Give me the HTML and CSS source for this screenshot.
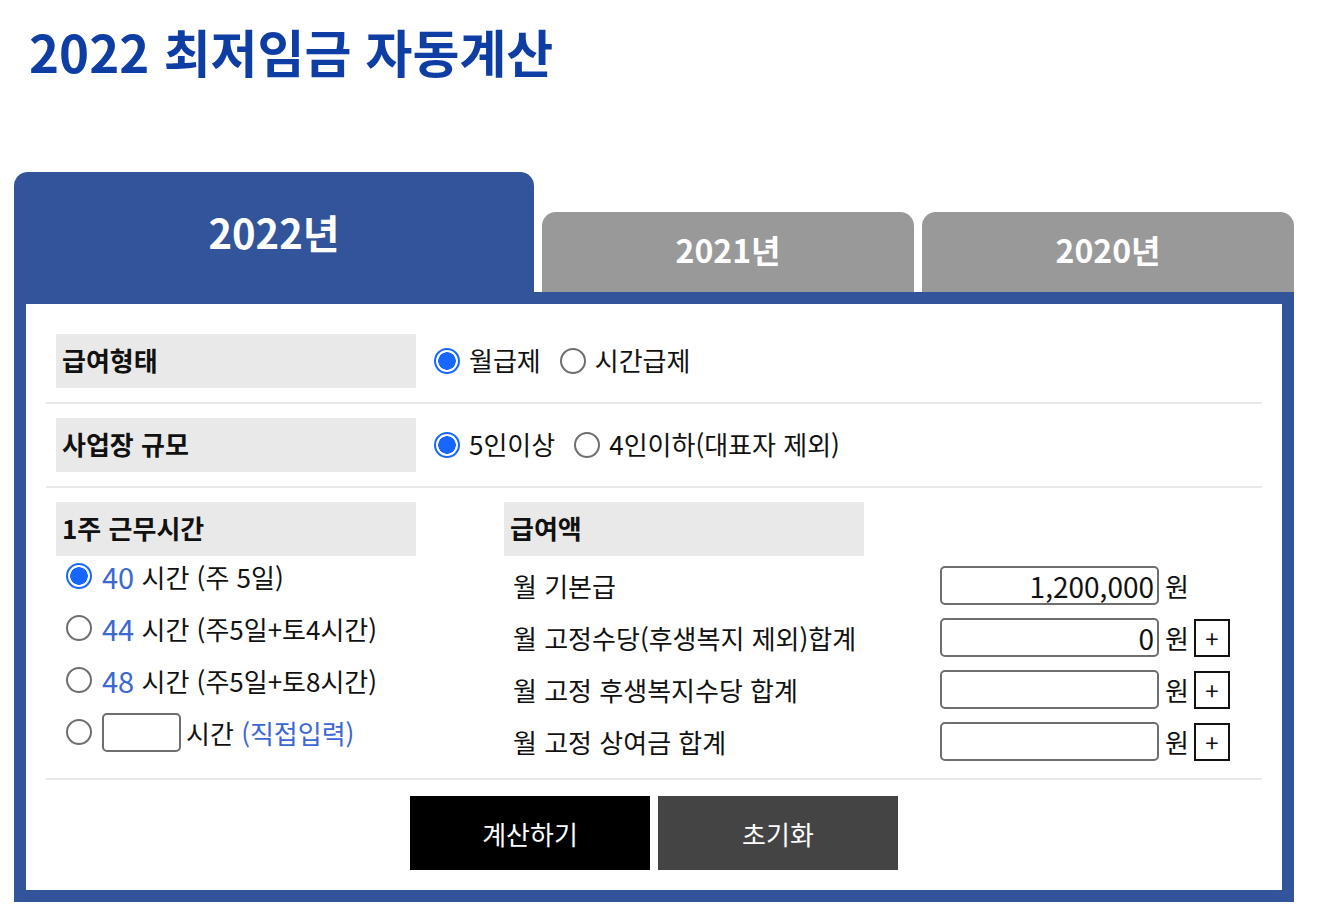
FILE: index.html
```html
<!DOCTYPE html>
<html lang="ko">

<head>
    <meta charset="UTF-8">
    <meta name="viewport" content="width=device-width, initial-scale=1.0">
    <title>2022 최저임금 자동계산</title>
    <link rel="stylesheet" href="styles.css">
</head>

<body>
    <h1 class="page-title">2022 최저임금 자동계산</h1>

    <div class="calc">
        <div class="tabs">
            <div class="tab active">2022년</div>
            <div class="tab">2021년</div>
            <div class="tab">2020년</div>
        </div>

        <div class="panel">
            <div class="row">
                <div class="label">급여형태</div>
                <div class="options">
                    <label class="opt"><input class="radio" type="radio" name="paytype" checked>월급제</label>
                    <label class="opt"><input class="radio" type="radio" name="paytype">시간급제</label>
                </div>
            </div>

            <div class="row">
                <div class="label">사업장 규모</div>
                <div class="options">
                    <label class="opt"><input class="radio" type="radio" name="size" checked>5인이상</label>
                    <label class="opt"><input class="radio" type="radio" name="size">4인이하(대표자 제외)</label>
                </div>
            </div>

            <div class="row row-split">
                <div class="col-hours">
                    <div class="label">1주 근무시간</div>
                    <div class="hour-list">
                        <label class="hour"><input class="radio" type="radio" name="hours" checked><span class="num digits">40</span> 시간 (주 5일)</label>
                        <label class="hour"><input class="radio" type="radio" name="hours"><span class="num digits">44</span> 시간 (주5일+토4시간)</label>
                        <label class="hour"><input class="radio" type="radio" name="hours"><span class="num digits">48</span> 시간 (주5일+토8시간)</label>
                        <label class="hour"><input class="radio" type="radio" name="hours"><input class="hour-input" type="text">시간 <span class="num">(직접입력)</span></label>
                    </div>
                </div>

                <div class="col-pay">
                    <div class="label">급여액</div>
                    <div class="pay-list">
                        <div class="pay-row">
                            <span class="pay-name">월 기본급</span>
                            <input class="money" type="text" value="1,200,000">
                            <span class="won">원</span>
                        </div>
                        <div class="pay-row">
                            <span class="pay-name">월 고정수당(후생복지 제외)합계</span>
                            <input class="money" type="text" value="0">
                            <span class="won">원</span>
                            <button class="plus">+</button>
                        </div>
                        <div class="pay-row">
                            <span class="pay-name">월 고정 후생복지수당 합계</span>
                            <input class="money" type="text">
                            <span class="won">원</span>
                            <button class="plus">+</button>
                        </div>
                        <div class="pay-row">
                            <span class="pay-name">월 고정 상여금 합계</span>
                            <input class="money" type="text">
                            <span class="won">원</span>
                            <button class="plus">+</button>
                        </div>
                    </div>
                </div>
            </div>

            <div class="actions">
                <button class="btn btn-calc">계산하기</button>
                <button class="btn btn-reset">초기화</button>
            </div>
        </div>
    </div>
</body>

</html>
```

FILE: styles.css
```css
* {
    box-sizing: border-box;
}

body {
    margin: 0;
    font-family: "Noto Sans CJK KR", "Noto Sans", sans-serif;
    font-size: 26px;
    color: #111;
    background-color: #fff;
}

input,
button {
    font-family: inherit;
}

.page-title {
    margin: 21px 0 0 29px;
    font-size: 51px;
    line-height: 60px;
    font-weight: 700;
    color: #0e3da4;
}

.calc {
    width: 1280px;
    margin: 91px 0 0 14px;
}

.tabs {
    display: flex;
    align-items: flex-end;
    gap: 8px;
}

.tab {
    width: 372px;
    height: 80px;
    line-height: 74px;
    border-radius: 14px 14px 0 0;
    background-color: #999;
    color: #fff;
    font-size: 32px;
    font-weight: 700;
    text-align: center;
}

.tab.active {
    width: 520px;
    height: 120px;
    line-height: 120px;
    font-size: 40px;
    background-color: #31549a;
}

.panel {
    border: 12px solid #31549a;
    padding: 16px 20px 0;
}

.row {
    display: flex;
    align-items: center;
    padding: 14px 10px;
    border-bottom: 2px solid #e8e8e8;
}

.label {
    width: 360px;
    height: 54px;
    line-height: 52px;
    padding-left: 6px;
    background-color: #e9e9e9;
    font-weight: 700;
}

.options {
    display: flex;
    align-items: center;
    margin-left: 18px;
    padding-bottom: 3px;
}

.opt {
    display: flex;
    align-items: center;
    margin-right: 19px;
}

.opt .radio {
    margin-top: 3px;
}

.radio {
    appearance: none;
    flex: none;
    width: 26px;
    height: 26px;
    margin: 0 9px 0 0;
    border: 2px solid #6e6e6e;
    border-radius: 50%;
    background: #fff;
}

.radio:checked {
    border-color: #1766ff;
    background: radial-gradient(circle, #1766ff 0 8.5px, #fff 9px);
}

.row-split {
    display: grid;
    grid-template-columns: 448px 1fr;
    align-items: start;
    padding-bottom: 17px;
}

.hour-list {
    display: flex;
    flex-direction: column;
    gap: 12px;
}

.hour {
    display: flex;
    align-items: center;
    height: 40px;
    padding-left: 10px;
    white-space: pre;
}

.hour .radio {
    margin-right: 10px;
}

.num {
    color: #3b67d3;
}

.digits {
    font-size: 29px;
}

.hour-input {
    width: 79px;
    height: 39px;
    margin-right: 5px;
    border: 2px solid #6e6e6e;
    border-radius: 5px;
}

.pay-list {
    display: flex;
    flex-direction: column;
    gap: 13px;
    margin-top: 10px;
}

.pay-row {
    display: flex;
    align-items: center;
    height: 39px;
}

.pay-name {
    width: 436px;
    padding-left: 9px;
}

.money {
    width: 219px;
    height: 39px;
    padding: 0 3px;
    border: 2px solid #6e6e6e;
    border-radius: 5px;
    font-size: 28px;
    text-align: right;
    color: #111;
}

.won {
    margin-left: 6px;
}

.plus {
    width: 36px;
    height: 38px;
    margin-left: 5px;
    padding: 0;
    border: 2px solid #111;
    background: #fff;
    font-size: 24px;
    line-height: 1;
    color: #111;
}

.actions {
    display: flex;
    justify-content: center;
    gap: 8px;
    padding: 16px 0 20px;
}

.btn {
    width: 240px;
    height: 74px;
    border: none;
    font-size: 26px;
    color: #fff;
}

.btn-calc {
    background-color: #000;
}

.btn-reset {
    background-color: #444;
}
```
